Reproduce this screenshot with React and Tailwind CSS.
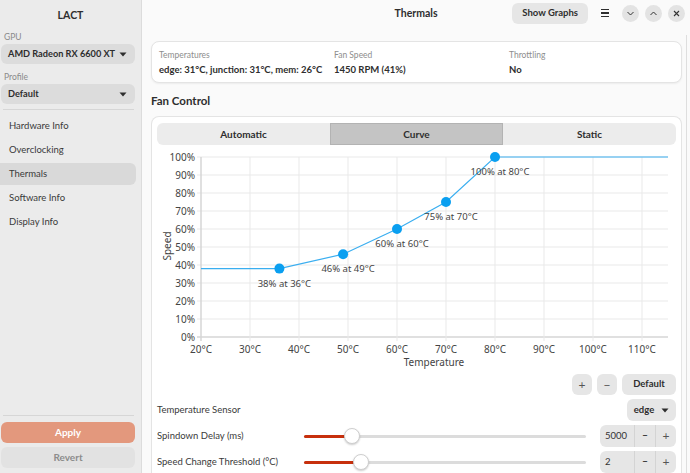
import React from "react";

const Caret = ({ className = "" }) => (
  <svg width="8" height="5" viewBox="0 0 8 5" className={className}>
    <path d="M0.5 0.5 L7.5 0.5 L4 4.5 Z" fill="#2e2e2e" />
  </svg>
);

function Sidebar() {
  const items = ["Hardware Info", "Overclocking", "Thermals", "Software Info", "Display Info"];
  return (
    <div className="w-[142px] h-full bg-[#ebebeb] border-r border-[#dcdcdc] flex flex-col shrink-0 whitespace-nowrap">
      <div className="h-[30px] pt-[2px] flex items-center justify-center text-[10.5px] font-bold text-[#2e2e2e]">LACT</div>
      <div className="pl-[4px] h-[13px] mt-[1px] text-[8.5px] leading-[13px] text-[#8a8a8a]">GPU</div>
      <div className="mx-[1px] mr-[6px] h-[20px] rounded-[6px] bg-[#dcdcdc] flex items-center justify-between pl-[7px] pr-[8px]">
        <span className="text-[9.2px] font-bold text-[#2e2e2e]">AMD Radeon RX 6600 XT</span>
        <Caret />
      </div>
      <div className="pl-[4px] h-[13px] mt-[7px] text-[8.5px] leading-[13px] text-[#8a8a8a]">Profile</div>
      <div className="mx-[1px] mr-[6px] h-[20px] rounded-[6px] bg-[#dcdcdc] flex items-center justify-between pl-[7px] pr-[8px]">
        <span className="text-[9.2px] font-bold text-[#2e2e2e]">Default</span>
        <Caret />
      </div>
      <div className="mt-[5px] mx-[3px] mr-[7px] h-px bg-[#d6d6d6]" />
      <div className="mt-[5px] flex flex-col gap-[2px] mr-[5px]">
        {items.map((t) => (
          <div
            key={t}
            className={`h-[22px] flex items-center pl-[9px] text-[9.5px] text-[#3a3a3a] rounded-r-[6px] ${t === "Thermals" ? "bg-[#d9d9d9]" : ""}`}
          >
            {t}
          </div>
        ))}
      </div>
      <div className="flex-1" />
      <div className="mx-[3px] mr-[7px] h-px bg-[#d6d6d6]" />
      <div className="mt-[6px] mx-[1px] mr-[6px] h-[21px] rounded-[6px] bg-[#e3987d] flex items-center justify-center text-[10px] font-bold text-white">
        Apply
      </div>
      <div className="mt-[4px] mb-[5px] mx-[1px] mr-[6px] h-[21px] rounded-[6px] bg-[#e2e2e2] flex items-center justify-center text-[10px] font-bold text-[#8c8c8c]">
        Revert
      </div>
    </div>
  );
}

function CircleBtn({ children }) {
  return (
    <div className="w-[17px] h-[17px] rounded-full bg-[#e3e3e3] flex items-center justify-center">{children}</div>
  );
}

function Header() {
  return (
    <div className="h-[30px] grid grid-cols-[1fr_auto_1fr] items-center pt-[1px]">
      <div />
      <div className="text-[10.5px] font-bold text-[#2e2e2e] pt-[2px]">Thermals</div>
      <div className="flex items-center justify-end pr-[5px]">
        <div className="h-[21px] px-[10px] rounded-[6px] bg-[#e6e6e6] flex items-center text-[9.5px] font-bold text-[#2e2e2e]">
          Show Graphs
        </div>
        <div className="ml-[13px] flex flex-col gap-[2px] w-[8px]">
          <div className="h-[1.5px] bg-[#2e2e2e]" />
          <div className="h-[1.5px] bg-[#2e2e2e]" />
          <div className="h-[1.5px] bg-[#2e2e2e]" />
        </div>
        <div className="ml-[13px] flex gap-[6px]">
          <CircleBtn>
            <svg width="9" height="9" viewBox="0 0 9 9"><path d="M1.5 3 L4.5 6 L7.5 3" fill="none" stroke="#333" strokeWidth="1" /></svg>
          </CircleBtn>
          <CircleBtn>
            <svg width="9" height="9" viewBox="0 0 9 9"><path d="M1.5 6 L4.5 3 L7.5 6" fill="none" stroke="#333" strokeWidth="1" /></svg>
          </CircleBtn>
          <CircleBtn>
            <svg width="9" height="9" viewBox="0 0 9 9"><path d="M2 2 L7 7 M7 2 L2 7" fill="none" stroke="#333" strokeWidth="1.1" /></svg>
          </CircleBtn>
        </div>
      </div>
    </div>
  );
}

function InfoCard() {
  const cols = [
    ["Temperatures", "edge: 31°C, junction: 31°C, mem: 26°C"],
    ["Fan Speed", "1450 RPM (41%)"],
    ["Throttling", "No"],
  ];
  return (
    <div className="mt-[16px] h-[42px] rounded-[8px] border border-[#e4e4e4] bg-white shadow-[0_1px_2px_rgba(0,0,0,0.06)] grid grid-cols-[175px_175px_1fr] pl-[7px] items-center">
      {cols.map(([l, v]) => (
        <div key={l} className="flex flex-col pt-[3px]">
          <span className="text-[8.5px] leading-[13px] text-[#8e8e8e]">{l}</span>
          <span className="text-[9.5px] leading-[16px] font-bold text-[#2e2e2e] whitespace-nowrap">{v}</span>
        </div>
      ))}
    </div>
  );
}

function Chart() {
  const X = (t) => 44 + (t - 20) * 4.9;
  const Y = (p) => 192 - p * 1.8;
  const pts = [
    [36, 38],
    [49, 46],
    [60, 60],
    [70, 75],
    [80, 100],
  ];
  const right = 511;
  const line =
    `M ${X(20)} ${Y(38)} ` +
    pts.map(([t, p]) => `L ${X(t)} ${Y(p)}`).join(" ") +
    ` L ${right} ${Y(100)}`;
  return (
    <svg width="519" height="229" viewBox="0 0 519 229" className="block font-['Noto_Sans',sans-serif]">
      {Array.from({ length: 11 }, (_, i) => i * 10).map((p) => (
        <g key={p}>
          <line x1={X(20) - 4} x2={right} y1={Y(p)} y2={Y(p)} stroke={p === 0 ? "#d6d6d6" : "#e9e9e9"} strokeWidth={p === 0 ? 1.5 : 1} />
          <text x="38" y={Y(p) + 3.5} textAnchor="end" fontSize="10" fill="#444">{p}%</text>
        </g>
      ))}
      {Array.from({ length: 10 }, (_, i) => 20 + i * 10).map((t) => (
        <g key={t}>
          <line x1={X(t)} x2={X(t)} y1={Y(100)} y2={Y(0) + 4} stroke={t === 20 ? "#d6d6d6" : "#e9e9e9"} strokeWidth={t === 20 ? 1.5 : 1} />
          <text x={X(t)} y="208" textAnchor="middle" fontSize="10" fill="#444">{t}°C</text>
        </g>
      ))}
      <text x="277" y="221" textAnchor="middle" fontSize="10" fill="#444">Temperature</text>
      <text x="0" y="0" textAnchor="middle" fontSize="10" fill="#444" transform="translate(14 101) rotate(-90)">Speed</text>
      <path d={line} fill="none" stroke="#3aaef0" strokeWidth="1.2" />
      {pts.map(([t, p]) => (
        <g key={t}>
          <circle cx={X(t)} cy={Y(p)} r="5" fill="#0a9ff0" />
          <text x={X(t) + 5} y={Y(p) + 18} textAnchor="middle" fontSize="9.5" fill="#444">{`${p}% at ${t}°C`}</text>
        </g>
      ))}
    </svg>
  );
}

function Slider({ pos }) {
  return (
    <div className="relative flex-1 h-[16px] flex items-center">
      <div className="w-full h-[3px] rounded-full bg-[#dcdcdc]" />
      <div className={`absolute left-0 top-[6.5px] h-[3px] rounded-full bg-[#c7300d] ${pos === 48 ? "w-[48px]" : "w-[57px]"}`} />
      <div className={`absolute top-0 w-[16px] h-[16px] rounded-full bg-white border border-[#cfcfcf] shadow-[0_1px_2px_rgba(0,0,0,0.2)] ${pos === 48 ? "left-[40px]" : "left-[49px]"}`} />
    </div>
  );
}

function Spin({ value }) {
  return (
    <div className="ml-[14px] w-[76px] h-[22px] rounded-[6px] bg-[#e6e6e6] flex items-center text-[9.5px] text-[#333]">
      <div className="flex-1 pl-[5px]">{value}</div>
      <div className="w-[21px] h-full border-l border-[#d4d4d4] flex items-center justify-center font-bold">−</div>
      <div className="w-[21px] h-full border-l border-[#d4d4d4] flex items-center justify-center text-[12px] text-[#555]">+</div>
    </div>
  );
}

function FanControl() {
  return (
    <>
      <div className="mt-[9px] h-[17px] flex items-center text-[11.5px] font-bold text-[#2e2e2e]">Fan Control</div>
      <div className="mt-[7px] rounded-t-[8px] border border-b-0 border-[#e4e4e4] bg-white px-[5px] pt-[6px] whitespace-nowrap">
        <div className="h-[22px] rounded-[6px] bg-[#ececec] grid grid-cols-3 text-[10px] font-bold text-[#2e2e2e]">
          <div className="flex items-center justify-center">Automatic</div>
          <div className="flex items-center justify-center bg-[#c4c4c4] border border-[#b3b3b3]">Curve</div>
          <div className="flex items-center justify-center">Static</div>
        </div>
        <Chart />
        <div className="h-[21px] flex justify-end gap-[5px] text-[9.5px] text-[#2e2e2e]">
          <div className="w-[20px] rounded-[6px] bg-[#e6e6e6] flex items-center justify-center text-[12px] text-[#555]">+</div>
          <div className="w-[20px] rounded-[6px] bg-[#e6e6e6] flex items-center justify-center text-[12px] text-[#555]">−</div>
          <div className="w-[54px] rounded-[6px] bg-[#e6e6e6] flex items-center justify-center font-bold">Default</div>
        </div>
        <div className="mt-[4px] h-[22px] flex items-center text-[9.5px] text-[#3a3a3a]">
          <div className="flex-1">Temperature Sensor</div>
          <div className="w-[49px] h-full rounded-[6px] bg-[#e6e6e6] flex items-center justify-center gap-[7px]">
            <span className="font-bold text-[#2e2e2e]">edge</span>
            <Caret />
          </div>
        </div>
        <div className="mt-[4px] h-[22px] flex items-center text-[9.5px] text-[#3a3a3a]">
          <div className="w-[147px]">Spindown Delay (ms)</div>
          <Slider pos={48} />
          <Spin value="5000" />
        </div>
        <div className="mt-[4px] h-[22px] flex items-center text-[9.5px] text-[#3a3a3a]">
          <div className="w-[147px]">Speed Change Threshold (°C)</div>
          <Slider pos={57} />
          <Spin value="2" />
        </div>
      </div>
    </>
  );
}

export default function App() {
  return (
    <div className="w-[690px] h-[473px] overflow-hidden flex bg-[#fafafa] font-['Lato',sans-serif]">
      <Sidebar />
      <div className="flex-1 flex flex-col relative">
        <Header />
        <div className="pl-[9px] pr-[8px] flex flex-col">
          <InfoCard />
          <FanControl />
        </div>
        <div className="absolute right-[3px] top-[35px] bottom-0 w-px bg-[#dedede]" />
      </div>
    </div>
  );
}
